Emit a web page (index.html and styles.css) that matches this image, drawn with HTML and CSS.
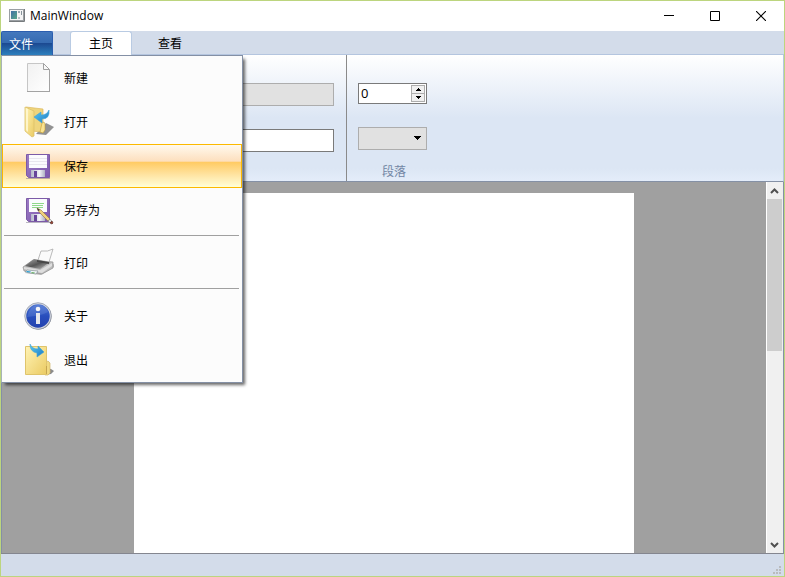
FILE: index.html
```html
<!DOCTYPE html>
<html lang="zh-CN">
<head>
<meta charset="utf-8">
<title>MainWindow</title>
<link rel="stylesheet" href="styles.css">
</head>
<body>
<div class="window">
  <header class="titlebar">
    <svg class="app-icon" width="16" height="14" viewBox="0 0 16 14" aria-hidden="true">
      <defs><linearGradient id="app" x1="0" y1="0" x2="1" y2="1"><stop offset="0" stop-color="#3f6fa6"/><stop offset="1" stop-color="#57a887"/></linearGradient></defs>
      <rect x=".5" y=".5" width="14" height="11" fill="#f4f4f4" stroke="#9a9fa3"/>
      <path d="M0 12.500h15.500V0" fill="none" stroke="#777b7e"/>
      <rect x="2" y="2" width="6" height="8" fill="url(#app)"/>
      <rect x="9" y="2" width="2" height="2" fill="#9babb6"/><rect x="9" y="8" width="2" height="2" fill="#b7c0c6"/><rect x="12" y="2" width="1" height="4" fill="#87939b"/>
    </svg>
    <h1 class="title">MainWindow</h1>
    <div class="window-buttons">
      <button class="window-button" aria-label="最小化"><svg width="10" height="10"><path d="M0 4.500h10" stroke="#000"/></svg></button>
      <button class="window-button" aria-label="最大化"><svg width="10" height="10"><path d="M.5.5h9v9h-9z" fill="none" stroke="#000"/></svg></button>
      <button class="window-button" aria-label="关闭"><svg width="10" height="10"><path d="M0 0l10 10M10 0L0 10" stroke="#000" stroke-width="1.1"/></svg></button>
    </div>
  </header>

  <nav class="tabs">
    <div class="file">
      <button class="file-button" aria-expanded="true">文件</button>
      <ul class="menu">
        <li><button class="menu-item">
          <svg class="menu-icon" viewBox="0 0 32 32"><defs><linearGradient id="paper" x1="0" y1="0" x2="1" y2="1"><stop offset="0" stop-color="#f1f1f1"/><stop offset="1" stop-color="#fff"/></linearGradient></defs><path d="M5.500 1.500h16l6 6v22h-22z" fill="url(#paper)" stroke="#c6c6c6"/><path d="M5 29.500h23M27.500 8v21" fill="none" stroke="#a3a3a3"/><path d="M21.500 1.500v6h6z" fill="#f8f8f8" stroke="#a0a0a0"/></svg>
          <span>新建</span></button></li>
        <li><button class="menu-item">
          <svg class="menu-icon" viewBox="0 0 32 32"><defs><linearGradient id="fold" x1="0" y1="0" x2="1" y2="1"><stop offset="0" stop-color="#fff3b5"/><stop offset="1" stop-color="#ebcb63"/></linearGradient><linearGradient id="arrow" x1="0" y1="0" x2="1" y2="1"><stop offset="0" stop-color="#58cdf3"/><stop offset="1" stop-color="#1c78c4"/></linearGradient></defs><path d="M14 28l10-11 8 4-8 8z" fill="#777" opacity=".8"/><path d="M4 1l17 2v23l-13-1z" fill="#efd57d" stroke="#dcb95d" stroke-width=".7"/><path d="M20 17l2-1 1 2v6l-2 3-3-1z" fill="#f9e391" stroke="#c49d36" stroke-width=".6"/><path d="M3 1l9 4v25l-2 1-7-6z" fill="url(#fold)" stroke="#dcc06a" stroke-width=".8"/><path d="M4 2l2 1v23l-2-2z" fill="#fff9d6" opacity=".8"/><path d="M12 11l7-5v3q6 0 8-5 1 9-7 9v4z" fill="url(#arrow)" stroke="#42a3d8" stroke-width=".6"/></svg>
          <span>打开</span></button></li>
        <li><button class="menu-item selected">
          <svg class="menu-icon" viewBox="0 0 32 32"><defs><linearGradient id="disk" x1="0" y1="0" x2="1" y2="1"><stop offset="0" stop-color="#9c7bc4"/><stop offset="1" stop-color="#7c58ad"/></linearGradient><linearGradient id="shutter" x1="0" x2="1"><stop offset="0" stop-color="#b4b7c9"/><stop offset=".6" stop-color="#f4f5fa"/><stop offset="1" stop-color="#aeb1c3"/></linearGradient></defs><path d="M4.500 4.500h23v23h-21l-2-2z" fill="url(#disk)" stroke="#7c5ba7"/><path d="M7 5h18v13H7z" fill="#fbfbfe"/><path d="M7 8.500h18M7 11.500h18M7 14.500h18" stroke="#e8e6ee"/><path d="M9 20h14v7H9z" fill="url(#shutter)"/><path d="M12 21h3v6h-3z" fill="#67459a"/><path d="M4 28.500h24" stroke="#7c738b" opacity=".5"/></svg>
          <span>保存</span></button></li>
        <li><button class="menu-item">
          <svg class="menu-icon" viewBox="0 0 32 32"><path d="M4.500 4.500h23v23h-21l-2-2z" fill="url(#disk)" stroke="#7c5ba7"/><path d="M7 5h18v13H7z" fill="#fbfbfe"/><path d="M10 9h12v1H10zM10 11h11v1H10zM10 13h11v1H10z" fill="#8fd88a"/><path d="M9 20h14v7H9z" fill="url(#shutter)"/><path d="M12 21h3v6h-3z" fill="#67459a"/><path d="M4 28.500h24" stroke="#7c738b" opacity=".5"/><path d="M15 14l4 2 9 9-2 2-9-9z" fill="#f0d27c" stroke="#94763c" stroke-width=".6"/><path d="M15 14l1 3 2-1z" fill="#333"/><path d="M26 27l2-2 2 2-2 2z" fill="#dedede" stroke="#777" stroke-width=".5"/><path d="M28 29l2-2 1 2-1 1z" fill="#a14232" stroke="#57332d" stroke-width=".7"/></svg>
          <span>另存为</span></button></li>
        <li class="separator" role="separator"></li>
        <li><button class="menu-item">
          <svg class="menu-icon" viewBox="0 0 32 32"><defs><linearGradient id="printer" x1="0" y1="0" x2="1" y2="1"><stop offset="0" stop-color="#aaa"/><stop offset=".5" stop-color="#555"/><stop offset="1" stop-color="#c8c8c8"/></linearGradient></defs><path d="M3 26l16 2 13-8v-3L17 23z" fill="#777" opacity=".5"/><path d="M1 20l10-7 20 2v6L20 27 2 24z" fill="#bcbcbc" stroke="#929292" stroke-width=".7"/><path d="M3 19l9-7 16 3-10 7z" fill="url(#printer)"/><path d="M16 13l3-9q7 1 12-2l-4 13z" fill="#fafafa" stroke="#aaa" stroke-width=".8"/><path d="M15 13l12 2v2l-12-2z" fill="#484848"/><path d="M2 20l16 3 12-7v3L20 26 2 22z" fill="#dedede"/><path d="M5 23l11 1-2 3-11-2z" fill="#f0f5f6" stroke="#68777e" stroke-width=".5"/><path d="M5 24l4 .5-1 1-4-.5z" fill="#239bd1"/><path d="M10 25l3 .5-1 1-3-.5z" fill="#6eb46d"/></svg>
          <span>打印</span></button></li>
        <li class="separator" role="separator"></li>
        <li><button class="menu-item">
          <svg class="menu-icon" viewBox="0 0 32 32"><defs><linearGradient id="info" x1="0" y1="0" x2="0" y2="1"><stop offset="0" stop-color="#5279d4"/><stop offset=".5" stop-color="#284ebd"/><stop offset="1" stop-color="#2341ae"/></linearGradient></defs><circle cx="16.500" cy="16.500" r="13" fill="#888"/><circle cx="16" cy="16" r="12.500" fill="url(#info)" stroke="#d5d8df" stroke-width="1.500"/><circle cx="16" cy="16" r="13.300" fill="none" stroke="#7b849a" stroke-width=".6"/><path d="M5 17Q8 5 16 5q8 0 10 7-7 4-21 5z" fill="#88a6e8" opacity=".25"/><circle cx="16" cy="9" r="2.300" fill="#f4f5f8"/><path d="M14 13h4v11h-4z" fill="#e5e7ed"/></svg>
          <span>关于</span></button></li>
        <li><button class="menu-item">
          <svg class="menu-icon" viewBox="0 0 32 32"><path d="M24 24l5 1 3 2-3 3-6 1z" fill="#666" opacity=".75"/><path d="M24 18l2-1 2 2v10l-2 2h-3z" fill="#f1d980" stroke="#d0b46a" stroke-width=".7"/><path d="M3.500 2.500h21v28h-21z" fill="url(#fold)" stroke="#dfc46b"/><path d="M24.500 22v8" stroke="#c6a550"/><path d="M8 0q2 5 8 5V2l6 6-7 5V9Q8 8 8 0z" fill="url(#arrow)" stroke="#42a3d8" stroke-width=".6"/></svg>
          <span>退出</span></button></li>
      </ul>
    </div>
    <button class="tab active">主页</button>
    <button class="tab">查看</button>
  </nav>

  <section class="ribbon">
    <div class="group font-group">
      <select class="field font-family" aria-label="字体" disabled></select>
      <input class="field font-text" type="text" aria-label="字体内容">
    </div>
    <div class="group paragraph-group">
      <div class="spin">
        <input class="spin-input" type="text" inputmode="numeric" value="0" aria-label="缩进">
        <div class="spin-buttons">
          <button class="step" aria-label="增加"><svg width="5" height="3"><path d="M2 0h1v1h1v1h1v1H0V2h1V1h1z"/></svg></button>
          <button class="step" aria-label="减少"><svg width="5" height="3"><path d="M0 0h5v1H4v1H3v1H2V2H1V1H0z"/></svg></button>
        </div>
      </div>
      <div class="combo">
        <select class="field combo-select" aria-label="段落样式" disabled></select>
        <svg class="combo-arrow" width="7" height="4" aria-hidden="true"><path d="M0 0h7v1H6v1H5v1H4v1H3V3H2V2H1V1H0z"/></svg>
      </div>
      <span class="caption">段落</span>
    </div>
  </section>

  <main class="workspace">
    <div class="canvas"><div class="page"></div></div>
    <div class="scrollbar">
      <button class="scroll-button" aria-label="向上滚动"><svg width="9" height="6"><path d="M1 5l3.500-3.500L8 5" fill="none" stroke="#505050" stroke-width="2"/></svg></button>
      <div class="track"><div class="thumb"></div></div>
      <button class="scroll-button" aria-label="向下滚动"><svg width="9" height="6"><path d="M1 1l3.500 3.500L8 1" fill="none" stroke="#505050" stroke-width="2"/></svg></button>
    </div>
  </main>

  <footer class="statusbar">
    <svg width="8" height="8" aria-hidden="true"><path d="M6 0h2v2H6zM3 3h2v2H3zM6 3h2v2H6zM0 6h2v2H0zM3 6h2v2H3zM6 6h2v2H6z" fill="#b9bbbd"/></svg>
  </footer>
</div>
</body>
</html>
```
FILE: styles.css
```css
* {
  box-sizing: border-box;
}

body {
  margin: 0;
  font: 12px/18px "Noto Sans CJK SC", sans-serif;
  color: #000;
}

button,
input,
select {
  margin: 0;
  padding: 0;
  border: 0;
  border-radius: 0;
  background: none;
  font: inherit;
  color: inherit;
}

svg {
  display: block;
  flex: none;
}

.window {
  display: flex;
  flex-direction: column;
  height: 100vh;
  border: 1px solid #bcd57e;
  background: #d3dcea;
}

.titlebar {
  display: flex;
  align-items: center;
  flex: none;
  height: 30px;
  padding-left: 8px;
  background: #fff;
}

.title {
  flex: 1;
  margin: 0 0 0 5px;
  font: 12px/18px "Open Sans", sans-serif;
}

.window-buttons {
  display: flex;
}

.window-button {
  display: flex;
  align-items: center;
  justify-content: center;
  width: 46px;
  height: 30px;
}

.tabs {
  display: flex;
  flex: none;
  height: 24px;
  border-bottom: 1px solid #b4c5df;
}

.file {
  position: relative;
  width: 52px;
  height: 24px;
  margin-right: 17px;
}

.file-button {
  width: 52px;
  height: 24px;
  padding: 0 0 0 7px;
  border: 1px solid #2b5eaf;
  border-radius: 2px 2px 0 0;
  border-bottom: 0;
  background: linear-gradient(#4478bd 0, #356ab1 50%, #1c4a92 50%, #2c7fbd 100%);
  color: #fff;
  text-align: left;
}

.tab {
  width: 62px;
  height: 24px;
  margin-right: 7px;
  border: 1px solid transparent;
  border-bottom: 0;
  padding-bottom: 1px;
}

.tab.active {
  border-color: #b9cbe3;
  border-radius: 3px 3px 0 0;
  background: #fff;
}

.menu {
  position: absolute;
  z-index: 2;
  top: 24px;
  left: 0;
  width: 242px;
  margin: 0;
  padding: 0;
  border: 1px solid #8490a5;
  border-left-color: #a7b3b6;
  background: #fcfcfc;
  box-shadow: 3px 3px 3px -1px #0009;
  list-style: none;
}

.menu-item {
  display: flex;
  align-items: center;
  gap: 10px;
  width: 100%;
  height: 44px;
  padding: 0 19px;
  border: 1px solid transparent;
}

.menu-item.selected {
  border-color: #fcb900;
  background: linear-gradient(#fff9ee 0, #fddfbd 39%, #ffca61 40%, #ffe3a0 70%, #ffffd8 100%);
}

.menu-icon {
  width: 32px;
  height: 32px;
}

.separator {
  height: 9px;
  padding: 3px 3px 0 2px;
}

.separator::before {
  content: "";
  display: block;
  height: 1px;
  background: #a0a0a0;
}

.ribbon {
  display: flex;
  flex: none;
  height: 127px;
  border-right: 1px solid #b4c5df;
  border-bottom: 1px solid #8490a5;
  background: linear-gradient(#fff 0, #dce6f4 50%, #dce6f4 90%, #e4edfa 100%);
}

.group {
  display: flex;
  flex-direction: column;
  padding-top: 28px;
}

.font-group {
  width: 346px;
  padding-right: 12px;
  padding-left: 12px;
  gap: 23px;
  border-right: 1px solid #8a8a8a;
}

.field {
  display: block;
  width: 100%;
  height: 23px;
  border: 1px solid #adadad;
  background: #e1e1e1;
  appearance: none;
  opacity: 1;
}

.font-text {
  border-color: #7a7a7a;
  background: #fff;
}

.paragraph-group {
  width: 92px;
  padding-left: 11px;
}

.spin {
  display: flex;
  width: 69px;
  height: 21px;
  padding: 1px;
  border: 1px solid #7a7a7a;
  background: #fff;
}

.spin-input {
  flex: 1;
  min-width: 0;
  padding-left: 1px;
  font: 13px/17px "Open Sans", sans-serif;
}

.spin-buttons {
  display: flex;
  flex-direction: column;
  width: 14px;
}

.step {
  display: flex;
  flex: 1;
  align-items: center;
  justify-content: center;
  border: 1px solid #adadad;
  background: #f0f0f0;
}

.step + .step {
  border-top: 0;
}

.combo {
  position: relative;
  width: 69px;
  margin-top: 23px;
}

.combo-arrow {
  position: absolute;
  top: 9px;
  right: 6px;
}

.caption {
  width: 72px;
  margin-top: 12px;
  color: #7387a5;
  text-align: center;
}

.workspace {
  display: flex;
  flex: 1;
  min-height: 0;
  border-right: 1px solid #8490a5;
  border-bottom: 1px solid #84868f;
}

.canvas {
  display: flex;
  flex: 1;
  justify-content: center;
  padding-top: 11px;
  border-left: 1px solid #8490a5;
  background: #a0a0a0;
}

.page {
  width: 500px;
  background: #fff;
}

.scrollbar {
  display: flex;
  flex-direction: column;
  width: 17px;
  padding-right: 1px;
  border-left: 1px solid #fff;
  background: #f0f0f0;
}

.scroll-button {
  display: flex;
  align-items: center;
  justify-content: center;
  height: 17px;
}

.track {
  flex: 1;
}

.thumb {
  height: 45%;
  background: #cdcdcd;
}

.statusbar {
  display: flex;
  align-items: flex-end;
  justify-content: flex-end;
  flex: none;
  height: 22px;
  padding: 0 3px 2px 0;
}
```
